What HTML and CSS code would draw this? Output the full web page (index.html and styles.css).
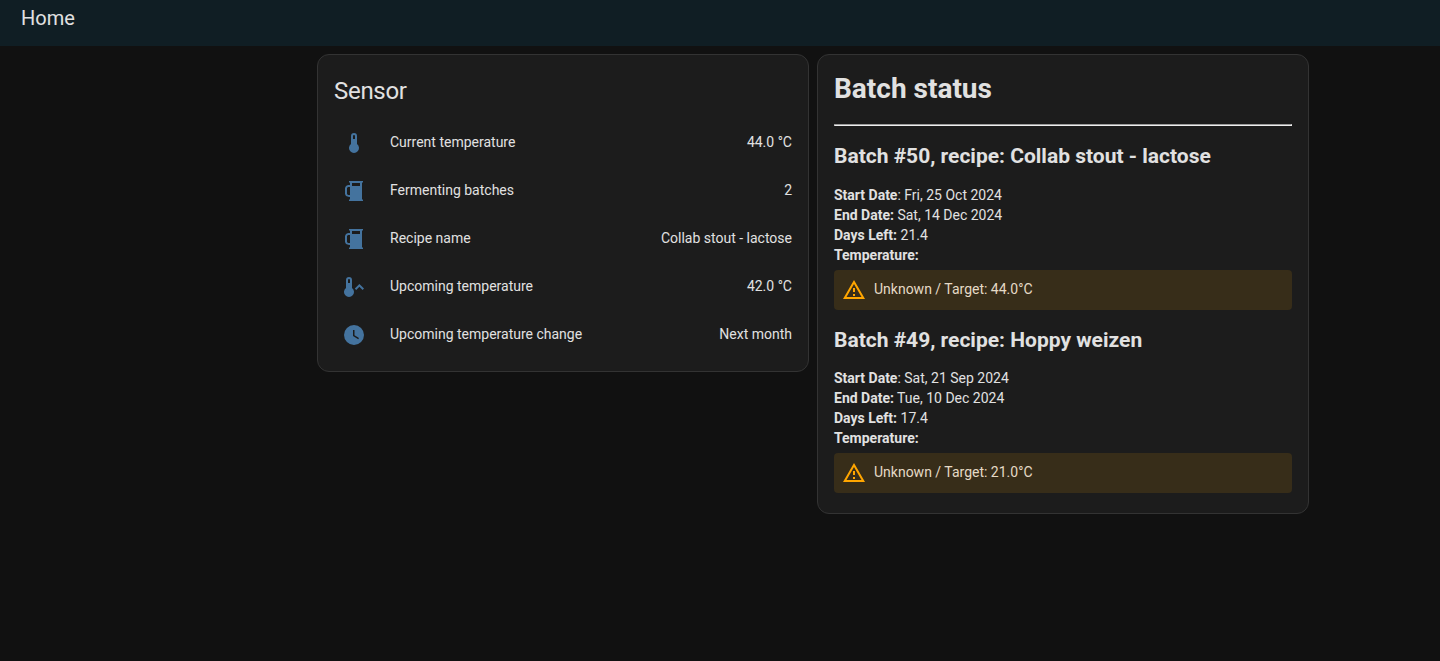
FILE: index.html
```html
<!DOCTYPE html>
<html lang="en">
<head>
<meta charset="utf-8">
<title>Home</title>
<link rel="stylesheet" href="styles.css">
</head>
<body>
<header class="toolbar">Home</header>
<main class="cards">
  <section class="card sensor">
    <h1 class="card-title">Sensor</h1>
    <div class="row"><svg class="icon" viewBox="0 0 24 24"><path d="M15 13V5A3 3 0 0 0 9 5V13A5 5 0 1 0 15 13M12 4A1 1 0 0 1 13 5V8H11V5A1 1 0 0 1 12 4Z"/></svg><span class="name">Current temperature</span><span class="value">44.0 °C</span></div>
    <div class="row"><svg class="icon" viewBox="0 0 24 24"><path fill-rule="evenodd" d="M7 2H21V3L20 4V20L21 21V22H7V21L8 20V18H7L4 17L3 15V9L4 7L6 6H8V4L7 3V2M10 4V7H18V4H10M8 8H6L5 9V15L6 16H8V8Z"/></svg><span class="name">Fermenting batches</span><span class="value">2</span></div>
    <div class="row"><svg class="icon" viewBox="0 0 24 24"><path fill-rule="evenodd" d="M7 2H21V3L20 4V20L21 21V22H7V21L8 20V18H7L4 17L3 15V9L4 7L6 6H8V4L7 3V2M10 4V7H18V4H10M8 8H6L5 9V15L6 16H8V8Z"/></svg><span class="name">Recipe name</span><span class="value">Collab stout - lactose</span></div>
    <div class="row"><svg class="icon" viewBox="0 0 24 24"><path d="M17.4 9L22 13.6L20.6 15L17.4 11.8L14.2 15L12.8 13.6L17.4 9M10 13V5A3 3 0 0 0 4 5V13A5 5 0 1 0 10 13M7 4A1 1 0 0 1 8 5V8H6V5A1 1 0 0 1 7 4Z"/></svg><span class="name">Upcoming temperature</span><span class="value">42.0 °C</span></div>
    <div class="row"><svg class="icon" viewBox="0 0 24 24"><path d="M12 2A10 10 0 1 0 22 12A10 10 0 0 0 12 2M16.2 16.2L11 13V7H12.5V12.2L17 14.9L16.2 16.2Z"/></svg><span class="name">Upcoming temperature change</span><span class="value">Next month</span></div>
  </section>
  <section class="card batches">
    <h1 class="status-title">Batch status</h1>
    <hr class="rule">
    <h2 class="batch-title">Batch #50, recipe: Collab stout - lactose</h2>
    <p class="details"><b>Start Date</b>: Fri, 25 Oct 2024<br><b>End Date:</b> Sat, 14 Dec 2024<br><b>Days Left:</b> 21.4<br><b>Temperature:</b></p>
    <div class="alert"><svg class="warn" viewBox="0 0 24 24"><path d="M12 2L1 21H23M12 6L19.53 19H4.47M11 10V14H13V10M11 16V18H13V16"/></svg><span class="alert-text">Unknown / Target: 44.0°C</span></div>
    <h2 class="batch-title">Batch #49, recipe: Hoppy weizen</h2>
    <p class="details"><b>Start Date</b>: Sat, 21 Sep 2024<br><b>End Date:</b> Tue, 10 Dec 2024<br><b>Days Left:</b> 17.4<br><b>Temperature:</b></p>
    <div class="alert"><svg class="warn" viewBox="0 0 24 24"><path d="M12 2L1 21H23M12 6L19.53 19H4.47M11 10V14H13V10M11 16V18H13V16"/></svg><span class="alert-text">Unknown / Target: 21.0°C</span></div>
  </section>
</main>
</body>
</html>
```

FILE: styles.css
```css
* { box-sizing: border-box; }
body {
  margin: 0;
  min-height: 661px;
  background: #111111;
  color: #e1e1e1;
  font: 14px/20px Roboto, sans-serif;
}
.toolbar {
  height: 46px;
  padding: 6px 21px;
  background: #101e24;
  font-size: 20px;
  line-height: 24px;
}
.cards {
  display: flex;
  align-items: flex-start;
  gap: 8px;
  padding: 8px 0 0 317px;
}
.card {
  width: 492px;
  padding: 0 16px;
  background: #1c1c1c;
  border: 1px solid #333333;
  border-radius: 12px;
}
.sensor { height: 318px; }
.card-title {
  margin: 0;
  padding: 12px 0 16px;
  font-size: 24px;
  font-weight: 400;
  line-height: 48px;
  letter-spacing: -0.288px;
  height: 68px;
}
.row {
  display: flex;
  align-items: center;
  height: 40px;
  margin-bottom: 8px;
}
.icon {
  width: 24px;
  height: 24px;
  margin: 0 24px 0 8px;
  fill: #44739e;
}
.name { flex: 1; }
.name, .value, .alert-text { padding-bottom: 2px; }
.alert-text { color: #e5dac6; }
.batches { height: 460px; }
.status-title {
  margin: 15px 0 16px;
  font-size: 28px;
  line-height: 38px;
}
.rule {
  height: 2px;
  margin: 0;
  border: 1px solid #9a9a9a;
  border-bottom-color: #eeeeee;
  border-right-color: #eeeeee;
}
.batch-title {
  margin: 18px 0 16px;
  font-size: 21px;
  line-height: 25px;
}
.alert + .batch-title { margin-bottom: 15px; }
.details { margin: 0; }
.alert {
  display: flex;
  align-items: center;
  height: 40px;
  margin-top: 5px;
  padding: 0 8px;
  background: #372d19;
  border-radius: 4px;
}
.warn {
  width: 24px;
  height: 24px;
  margin-right: 8px;
  fill: #ffa600;
}
```
